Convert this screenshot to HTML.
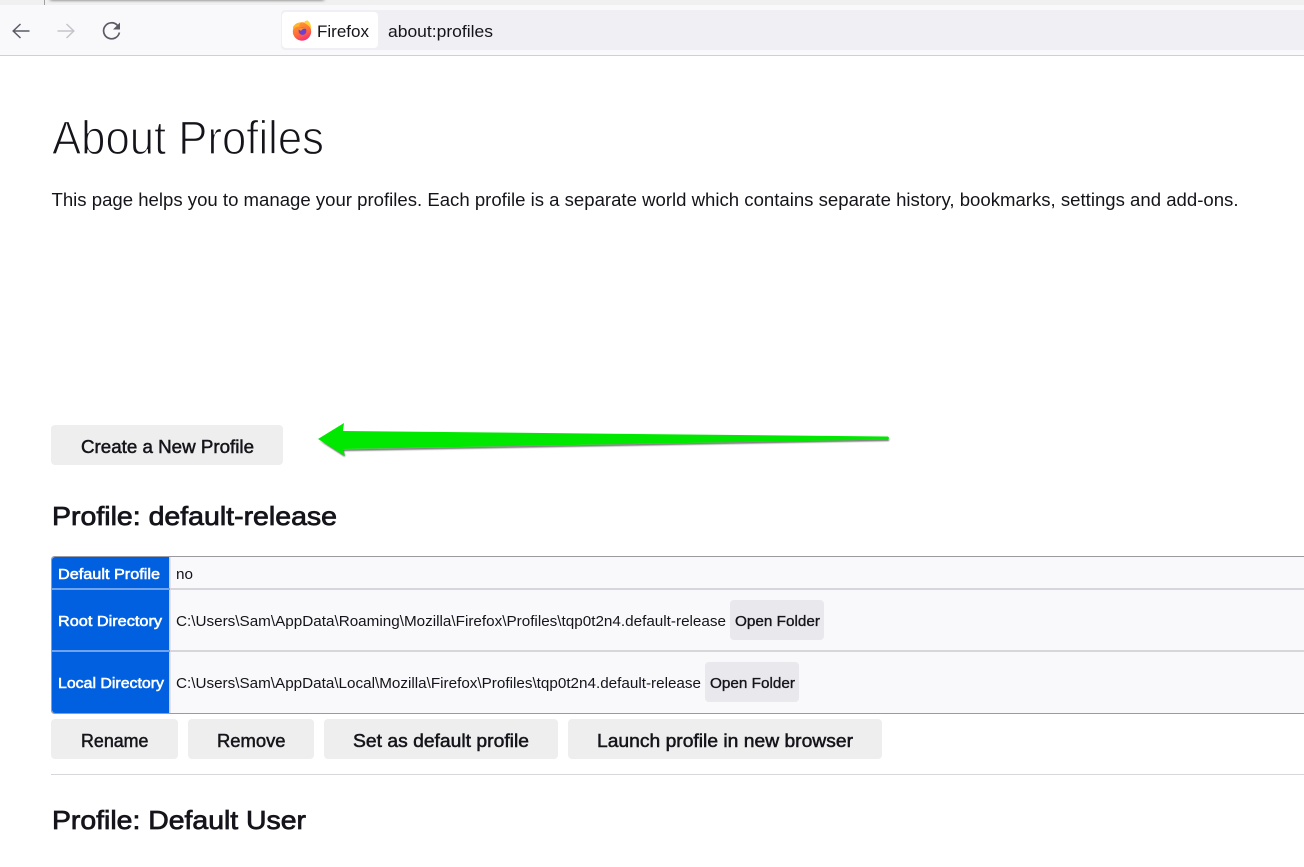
<!DOCTYPE html>
<html lang="en"><head><meta charset="utf-8"><title>About Profiles</title>
<style>
html,body{margin:0;padding:0;background:#fff;width:1304px;height:867px;overflow:hidden}
svg{display:block}
text{font-family:"Liberation Sans",Arial,sans-serif;fill:#15141a;white-space:pre}
.s{stroke:#15141a;stroke-width:.5px}
.w{fill:#fff;stroke:#fff;stroke-width:.55px;font-size:15px}
.c{font-size:14.5px}
.b{font-size:18px}
.o{font-size:15px}
.h{font-size:26px;stroke:#15141a;stroke-width:.75px}
</style></head><body>
<svg xmlns="http://www.w3.org/2000/svg" width="1304" height="867" viewBox="0 0 1304 867">
<defs>
<linearGradient id="ff" x1="0.2" y1="0" x2="0.6" y2="1"><stop offset="0" stop-color="#ffa02e"/><stop offset=".6" stop-color="#ff6a35"/><stop offset="1" stop-color="#f5307f"/></linearGradient>
<filter id="sh" x="-5%" y="-100%" width="110%" height="300%"><feGaussianBlur stdDeviation=".9"/></filter>
<filter id="ts" x="-5%" y="-200%" width="110%" height="400%"><feGaussianBlur stdDeviation="1.5"/></filter>
</defs>
<rect width="1304" height="867" fill="#fff"/>
<!-- browser chrome -->
<rect width="1304" height="5" fill="#f0f0f0"/>
<rect x="50" y="-3" width="274" height="3" rx="1" fill="#555" filter="url(#ts)"/>
<rect x="44" y="0" width="1" height="5" fill="#a0a0a0"/>
<rect y="5" width="1304" height="50" fill="#f9f9fb"/>
<rect y="55" width="1304" height="1" fill="#cfcfd8"/>
<rect x="281" y="10" width="1030" height="40" rx="4" fill="#f0f0f4"/>
<rect x="282" y="12" width="96" height="36" rx="4" fill="#fff"/>
<!-- nav icons -->
<g fill="none" stroke="#5b5b66" stroke-width="1.5">
<path d="M29.500 31H13.500M20.500 24L13.200 31L20.500 38"/>
</g>
<g fill="none" stroke="#c4c4ca" stroke-width="1.5">
<path d="M57.500 31H73.500M66.500 24L73.800 31L66.500 38"/>
</g>
<path d="M117.500 25.400A8 8 0 1 0 119.400 32.500" fill="none" stroke="#5b5b66" stroke-width="1.7"/>
<path d="M120 22.500V29.500H113Z" fill="#5b5b66"/>
<!-- firefox logo -->
<circle cx="302" cy="31.500" r="9.200" fill="url(#ff)"/>
<path d="M304.500 23C304 21 306 20.500 307.500 20.500C309.800 22 311.500 25.500 311.200 29C309.500 26.500 307.500 24.500 304.500 23Z" fill="#ffd23a"/>
<path d="M293 27C295 23.500 298 22.300 301 22.500C299.500 24 299 25 299.500 26.500C297 26.500 295 27 293 30Z" fill="#ffb52e"/>
<circle cx="302.500" cy="31" r="3.900" fill="#6e3fd0"/>
<path d="M298.500 29C300.500 27 304.500 26.800 306 28.800C304 28.300 302 29 301.500 30.500C300.500 31 299.500 30.300 298.500 29Z" fill="#ff8f2e"/>
<text x="317" y="37" font-size="17" textLength="52" lengthAdjust="spacingAndGlyphs">Firefox</text>
<text x="388" y="37" font-size="17" textLength="105" lengthAdjust="spacingAndGlyphs">about:profiles</text>
<!-- header -->
<text x="52" y="154" font-size="47" textLength="272" lengthAdjust="spacingAndGlyphs" stroke="#fff" stroke-width="1.2">About Profiles</text>
<text x="51.500" y="206" font-size="18" textLength="1187" lengthAdjust="spacingAndGlyphs">This page helps you to manage your profiles. Each profile is a separate world which contains separate history, bookmarks, settings and add-ons.</text>
<!-- create button + arrow -->
<rect x="51" y="425" width="232" height="40" rx="4" fill="#eeeeee"/>
<text class="b s" x="81" y="453" textLength="173" lengthAdjust="spacingAndGlyphs">Create a New Profile</text>
<path d="M320 441L345 457L344 451L889 441L889 439L343 449Z" fill="#444" opacity=".8" filter="url(#sh)"/>
<path d="M318 439L344 423L343 431L888 436.500Q890 438 888 439.500L343 449L345 456Z" fill="#00e800"/>
<!-- profile 1 -->
<text class="h" x="52" y="525" textLength="285" lengthAdjust="spacingAndGlyphs">Profile: default-release</text>
<rect x="51.500" y="556.500" width="1270" height="157" rx="3" fill="#f9f9fb" stroke="#9a9aa0"/>
<path d="M52 560a3 3 0 0 1 3-3H169V713H55a3 3 0 0 1-3-3Z" fill="#0060df"/>
<rect x="169" y="557" width="1.500" height="156" fill="#cfcfd8"/>
<rect x="52" y="588" width="118" height="2" fill="#6fa3ec"/>
<rect x="52" y="650" width="118" height="2" fill="#6fa3ec"/>
<rect x="170" y="588" width="1134" height="2" fill="#d7d7db"/>
<rect x="170" y="650" width="1134" height="2" fill="#d7d7db"/>
<text class="w" x="58" y="579" textLength="102" lengthAdjust="spacingAndGlyphs">Default Profile</text>
<text class="w" x="58" y="626" textLength="104" lengthAdjust="spacingAndGlyphs">Root Directory</text>
<text class="w" x="58" y="688" textLength="106" lengthAdjust="spacingAndGlyphs">Local Directory</text>
<text class="c" x="176" y="579" textLength="17" lengthAdjust="spacingAndGlyphs">no</text>
<text class="c" x="176" y="626" textLength="550" lengthAdjust="spacingAndGlyphs">C:\Users\Sam\AppData\Roaming\Mozilla\Firefox\Profiles\tqp0t2n4.default-release</text>
<text class="c" x="176" y="688" textLength="525" lengthAdjust="spacingAndGlyphs">C:\Users\Sam\AppData\Local\Mozilla\Firefox\Profiles\tqp0t2n4.default-release</text>
<rect x="730" y="600" width="94" height="40" rx="4" fill="#e9e9ed"/>
<text class="o" x="735" y="626" textLength="85" lengthAdjust="spacingAndGlyphs" stroke="#15141a" stroke-width=".35">Open Folder</text>
<rect x="705" y="662" width="94" height="40" rx="4" fill="#e9e9ed"/>
<text class="o" x="710" y="688" textLength="85" lengthAdjust="spacingAndGlyphs" stroke="#15141a" stroke-width=".35">Open Folder</text>
<!-- action buttons -->
<rect x="51" y="719" width="127" height="40" rx="4" fill="#eeeeee"/>
<text class="b s" x="81" y="747" textLength="67.500" lengthAdjust="spacingAndGlyphs">Rename</text>
<rect x="188" y="719" width="126" height="40" rx="4" fill="#eeeeee"/>
<text class="b s" x="217" y="747" textLength="68.500" lengthAdjust="spacingAndGlyphs">Remove</text>
<rect x="324" y="719" width="234" height="40" rx="4" fill="#eeeeee"/>
<text class="b s" x="353" y="747" textLength="176" lengthAdjust="spacingAndGlyphs">Set as default profile</text>
<rect x="568" y="719" width="314" height="40" rx="4" fill="#eeeeee"/>
<text class="b s" x="597" y="747" textLength="256" lengthAdjust="spacingAndGlyphs">Launch profile in new browser</text>
<rect x="51" y="774" width="1253" height="1" fill="#d7d7db"/>
<text class="h" x="52" y="829" textLength="254" lengthAdjust="spacingAndGlyphs">Profile: Default User</text>
</svg>
</body></html>
